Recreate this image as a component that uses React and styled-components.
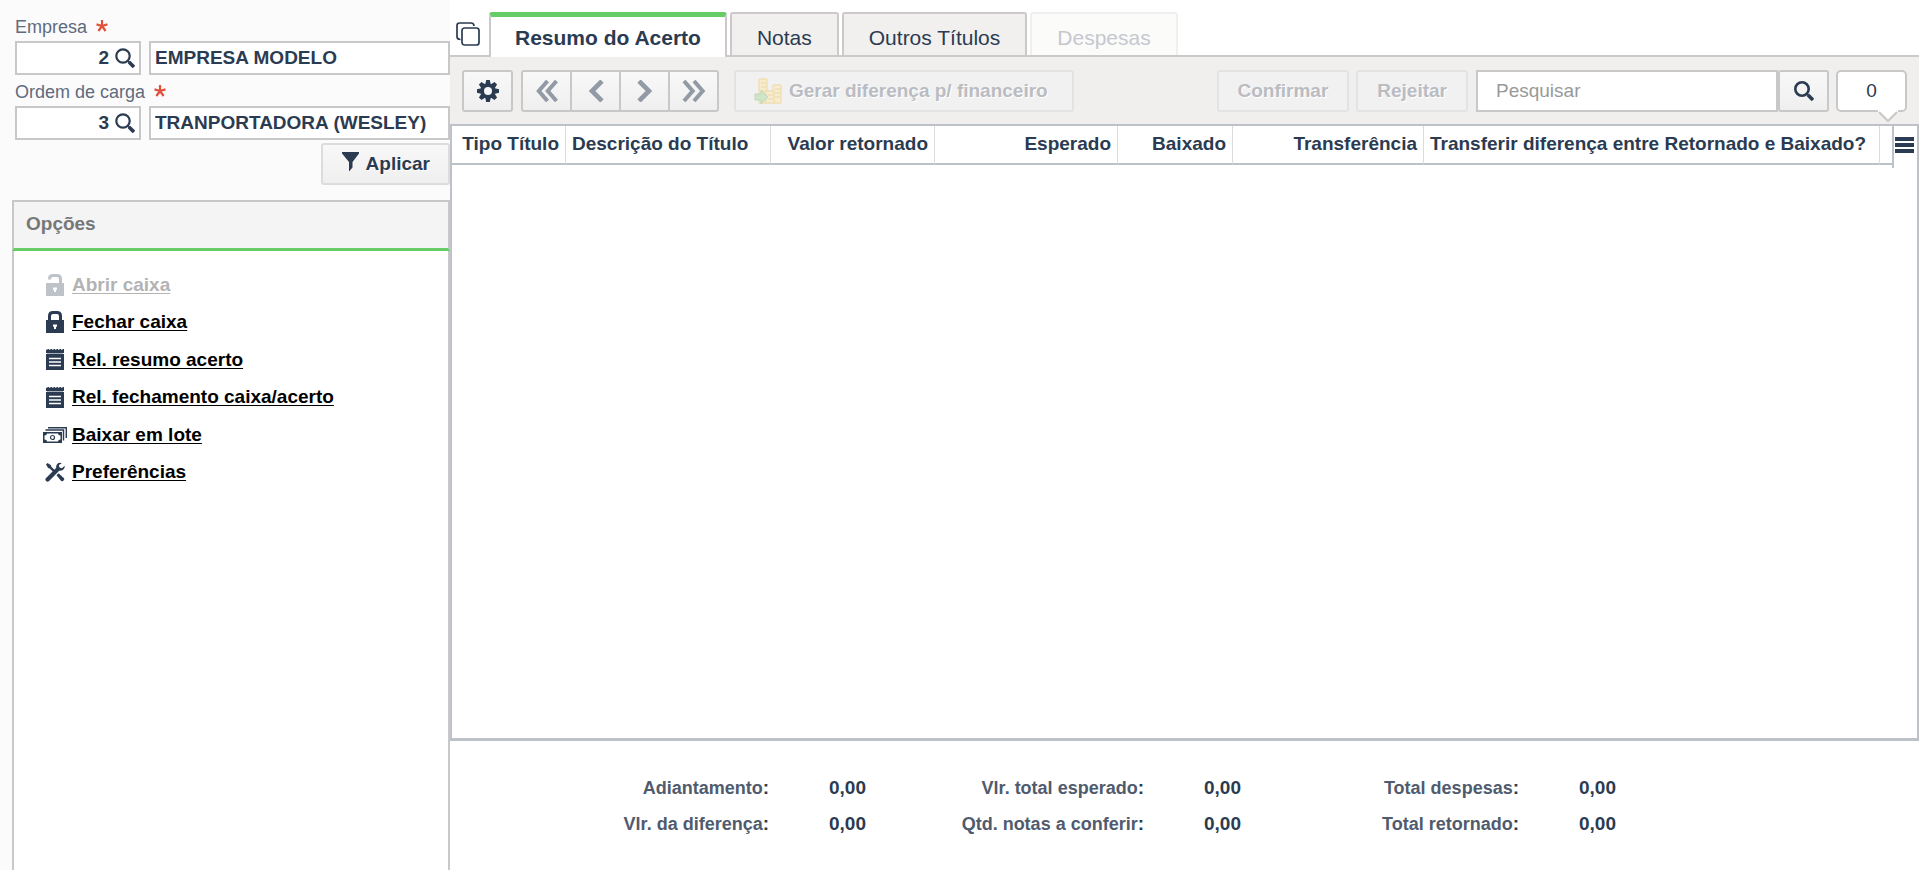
import React from "react";
import styled, { createGlobalStyle, css } from "styled-components";

const ink = "#2b3b51";
const line = "#c8c8c8";
const gridLine = "#bcc2c7";
const green = "#66cc66";

const GlobalStyle = createGlobalStyle`
  *, *::before, *::after { box-sizing: border-box; }
  body {
    margin: 0;
    background: #fff;
    color: ${ink};
    font-family: "Liberation Sans", Arial, sans-serif;
    font-size: 19px;
  }
  button, input { font: inherit; color: inherit; margin: 0; }
  svg { display: block; flex: none; }
`;

const Page = styled.div`
  display: grid;
  grid-template-columns: 450px minmax(0, 1fr);
  min-height: 100vh;
`;

/* ---------- sidebar ---------- */

const Sidebar = styled.aside`
  display: flex;
  flex-direction: column;
  background: #fbfbfb;
  padding: 12px 0 0 12px;
`;

const Filters = styled.form`
  display: flex;
  flex-direction: column;
  padding-left: 3px;
`;

const FieldLabel = styled.label`
  display: flex;
  align-items: flex-end;
  gap: 9px;
  height: 31px;
  font-size: 18px;
  line-height: 28px;
  color: #5f6b7e;
  &:first-child { height: 29px; }
`;

const Required = styled.svg`
  margin-bottom: 9px;
`;

const FieldRow = styled.div`
  display: flex;
  gap: 8px;
`;

const CodeBox = styled.div`
  display: flex;
  align-items: center;
  gap: 6px;
  width: 126px;
  height: 34px;
  padding-right: 4px;
  background: #fff;
  border: 2px solid ${line};
`;

const CodeInput = styled.input`
  flex: 1;
  min-width: 0;
  padding: 0;
  border: 0;
  background: none;
  font-weight: bold;
  text-align: right;
  outline: 0;
`;

const IconButton = styled.button`
  display: flex;
  padding: 0;
  border: 0;
  background: none;
`;

const NameInput = styled.input`
  flex: 1;
  min-width: 0;
  height: 34px;
  padding: 0 4px;
  background: #fff;
  border: 2px solid ${line};
  font-weight: bold;
`;

const Button = styled.button`
  display: flex;
  align-items: center;
  justify-content: center;
  gap: 7px;
  height: 42px;
  padding: ${(p) => p.$pad || "0"};
  min-width: 51px;
  border: 2px solid ${line};
  border-radius: 3px;
  background: linear-gradient(#f8f8f8, #efefef);
  font-weight: bold;
  text-shadow: 1px 1px 0 #fff;
  white-space: nowrap;
  ${(p) =>
    p.$soft &&
    css`
      border-color: #dcdcdc;
    `}
  &:disabled {
    color: #b9bcc2;
    border-color: #e4e3e4;
    background: #f2f1f1;
  }
`;

const ApplyRow = styled.div`
  display: flex;
  justify-content: flex-end;
  padding: 3px 0 15px;
`;

const OptionsPanel = styled.section`
  flex: 1;
  display: flex;
  flex-direction: column;
  background: #fff;
  border: 2px solid ${line};
  border-bottom: 0;
`;

const OptionsTitle = styled.h2`
  margin: 0 -2px;
  padding: 0 12px;
  height: 49px;
  line-height: 44px;
  font-size: 19px;
  color: #777;
  background: #f4f4f4;
  border: 2px solid ${line};
  border-top: 0;
  border-bottom: 3px solid ${green};
`;

const OptionsList = styled.ul`
  display: grid;
  grid-auto-rows: 1fr;
  height: 225px;
  margin: 15px 0;
  padding: 0 0 0 28px;
  list-style: none;
`;

const OptionItem = styled.li`
  display: flex;
  align-items: center;
  gap: 4px;
`;

const OptionIcon = styled.span`
  display: flex;
  justify-content: center;
  width: 26px;
  opacity: ${(p) => (p.$off ? 0.3 : 1)};
`;

const OptionLink = styled.a`
  color: ${(p) => (p.$off ? "#b3b3b3" : "#000")};
  font-weight: bold;
  text-decoration: underline;
  text-decoration-skip-ink: none;
  text-underline-offset: 2px;
`;

/* ---------- main area ---------- */

const Main = styled.main`
  display: flex;
  flex-direction: column;
  min-width: 0;
`;

const TabBar = styled.div`
  display: flex;
  align-items: flex-end;
  gap: 3px;
  height: 57px;
  border-bottom: 2px solid #cbc9ca;
`;

const CopyButton = styled(IconButton)`
  width: 36px;
  padding: 0 0 9px 6px;
`;

const Tab = styled.button`
  height: 43px;
  padding: 6px 25px 0;
  border: 2px solid #cdc8c9;
  border-bottom: 0;
  border-radius: 3px 3px 0 0;
  background: #f1f0ef;
  font-size: 21px;
  line-height: 24px;
  white-space: nowrap;
  ${(p) =>
    p.$active &&
    css`
      height: 45px;
      margin-bottom: -2px;
      padding: 4px 24px 3px;
      border-top: 5px solid ${green};
      background: #fff;
      font-weight: bold;
    `}
  &:disabled {
    color: #c5c8ce;
    border-color: #efefef;
    background: #fbfbfa;
  }
`;

const Toolbar = styled.div`
  display: flex;
  align-items: center;
  height: 67px;
  padding: 1px 12px 0;
  background: #f0efee;
`;

const NavGroup = styled.div`
  display: flex;
  margin: 0 15px 0 8px;
  color: #929aa6;
`;

const NavButton = styled(Button)`
  border-radius: 0;
  & + & { margin-left: -2px; }
  &:first-child { border-radius: 3px 0 0 3px; }
  &:last-child { border-radius: 0 3px 3px 0; }
`;

const Actions = styled.div`
  display: flex;
  gap: 7px;
  margin-left: auto;
`;

const SearchBox = styled.div`
  display: flex;
  margin: 0 7px 0 8px;
`;

const SearchInput = styled.input`
  width: 302px;
  height: 42px;
  padding: 0 18px;
  border: 2px solid ${line};
  background: #fff;
  &::placeholder { color: #999; opacity: 1; }
`;

const Counter = styled.output`
  position: relative;
  width: 71px;
  height: 42px;
  border: 2px solid ${line};
  border-radius: 5px;
  background: #fff;
  line-height: 38px;
  text-align: center;
`;

const CounterArrow = styled.svg`
  position: absolute;
  right: 7px;
  top: 38px;
`;

const GridPanel = styled.section`
  display: flex;
  align-items: flex-start;
  height: calc(100vh - 253px);
  min-height: 300px;
  border: 2px solid ${gridLine};
  border-bottom-width: 3px;
`;

const Table = styled.table`
  flex: 1;
  width: 0;
  table-layout: fixed;
  border-collapse: separate;
  border-spacing: 0;
`;

const HeadCell = styled.th`
  height: 39px;
  padding: 0 6px 1px;
  border-right: 1px solid #d9dcdf;
  border-bottom: 2px solid ${gridLine};
  text-align: ${(p) => p.$align || "right"};
  white-space: nowrap;
  overflow: hidden;
  &:last-child { border-right: 0; }
`;

const MenuButton = styled.button`
  display: flex;
  justify-content: center;
  width: 25px;
  height: 42px;
  padding: 11px 2px 0 0;
  border: 0;
  border-left: 2px solid ${gridLine};
  background: none;
`;

const Totals = styled.dl`
  display: grid;
  grid-template-columns: repeat(3, 375px);
  row-gap: 14px;
  margin: 0;
  padding: 36px 0 0 42px;
`;

const TotalItem = styled.div`
  display: flex;
  align-items: baseline;
  gap: 60px;
  line-height: 22px;
  font-weight: bold;
`;

const TotalLabel = styled.dt`
  width: 277px;
  text-align: right;
`;

const TotalName = styled.span`
  font-size: 18px;
  color: #505b6e;
`;

const TotalValue = styled.dd`
  margin: 0;
`;

/* ---------- icons ---------- */

const SearchIcon = ({ thick = 2.6 }) => (
  <svg width="20" height="20" viewBox="0 0 20 20" fill="none" stroke={ink}>
    <circle cx="8" cy="8" r="6.7" strokeWidth={thick} />
    <path d="M12.600 12.600l2 2" strokeWidth="2" />
    <path d="M14 14l5 5" strokeWidth="3.600" />
  </svg>
);

const Asterisk = () => (
  <Required width="12" height="12" viewBox="0 0 12 12" stroke="#e0503a" strokeWidth="2.2" fill="none" aria-hidden="true">
    <path d="M6 6V0M6 6L.5 4.4M6 6l5.500-1.600M6 6l-3.600 5M6 6l3.600 5" />
  </Required>
);

const FunnelShape = styled.svg`
  margin-bottom: 5px;
`;

const FunnelIcon = () => (
  <FunnelShape width="17" height="20" viewBox="0 0 17 20" fill={ink}>
    <path d="M0 0h17v1.500L10.500 10v5.500L7 19.500V10L0 1.500z" />
  </FunnelShape>
);

const LockIcon = ({ open }) => (
  <svg width="18" height="22" viewBox="0 0 18 22">
    <path
      d={open ? "M3.500 5.500V5q0-3.500 3.500-3.500h4q3.500 0 3.500 3.500v5" : "M3.500 10V5q0-3.500 3.500-3.500h4q3.500 0 3.500 3.500v5"}
      fill="none"
      stroke={ink}
      strokeWidth="3"
    />
    <path d="M0 9h18v13H0z" fill={ink} />
    <path d="M7 13.500h4v2.200h-1V18H8v-2.300H7z" fill="#fff" />
  </svg>
);

const ReportIcon = () => (
  <svg width="18" height="21" viewBox="0 0 18 21">
    <path d="M0 .7h1.500V0H3v.7h1.500V0H6v.7h1.500V0H9v.7h1.500V0H12v.7h1.500V0H15v.7h1.500V0H18v4H0zM1 4h16v1H1zM0 5h18v16H0z" fill={ink} />
    <path d="M0 4.500h18" stroke="#fff" strokeWidth=".6" />
    <path d="M3 9.500h12M3 13h12M3 16.500h12" stroke="#fff" strokeWidth="1.400" />
  </svg>
);

const MoneyIcon = () => (
  <svg width="24" height="16" viewBox="0 0 24 16">
    <path d="M5 .7h18.300V11M2.500 3h18v10.500" fill="none" stroke={ink} strokeWidth="1.400" />
    <path d="M0 5h19v11H0z" fill={ink} />
    <path d="M4 6.500h11q0 2 2.500 2v4q-2.500 0-2.500 2H4q0-2-2.500-2v-4q2.500 0 2.500-2z" fill="#fff" />
    <circle cx="9.500" cy="10.500" r="2" fill="none" stroke={ink} strokeWidth="1.200" />
  </svg>
);

const ToolsIcon = () => (
  <svg width="20" height="20" viewBox="0 0 20 20">
    <path d="M1 2.500L2.500 1l3.500 2.200.3 1.600 4 4-1.600 1.600-4-4-1.600-.3z" fill={ink} />
    <path d="M11.500 13.200l2-2 5.500 5q.8 1.300-.4 2.400-1.100 1.200-2.400.4z" fill={ink} />
    <path d="M2.600 17.400L13 7" stroke={ink} strokeWidth="4.200" strokeLinecap="round" />
    <path d="M16.800 1.200q-2.800-1-4.600.8-1.700 1.700-.8 4.300 2 3 5 2.300 3.400-1 3.400-4.800l-2.900 2.400-2.600-.7-.3-2.400z" fill={ink} />
  </svg>
);

const CopyIcon = () => (
  <svg width="24" height="24" viewBox="0 0 24 24" fill="none" stroke={ink} strokeWidth="1.700">
    <rect x="6" y="6" width="17" height="17" rx="2.500" />
    <path d="M4.500 17.500Q1 17.500 1 14.500V3.500q0-2.500 2.500-2.500h11.500q3 0 3 3" />
  </svg>
);

const GearIcon = () => (
  <svg width="22" height="22" viewBox="0 0 22 22">
    <g fill={ink}>
      {[0, 45, 90, 135].map((a) => (
        <path key={a} d="M9.200 0h3.600l.9 4v14l-.9 4H9.200l-.9-4V4z" transform={`rotate(${a} 11 11)`} />
      ))}
      <circle cx="11" cy="11" r="7.500" />
    </g>
    <circle cx="11" cy="11" r="4" fill="#f6f6f6" />
  </svg>
);

const Chevrons = ({ paths, width, stroke }) => (
  <svg width={width} height="22" viewBox={`0 0 ${width} 22`} fill="none" stroke="currentColor" strokeWidth={stroke}>
    <path d={paths} />
  </svg>
);

const CoinsIcon = () => (
  <svg width="28" height="26" viewBox="0 0 28 26" opacity=".45">
    <g fill="#fbe6a8" stroke="#efc765" strokeWidth="1.400">
      <rect x="5" y="1" width="8" height="24" rx="1" />
      <rect x="19" y="7" width="8" height="18" rx="1" />
      <rect x="12" y="13" width="8" height="12" rx="1" />
      <path d="M7 5h5M7 9h5M7 13h5M14 17h5M14 21h5M21 11h5M21 15h5M21 19h5" />
    </g>
    <path d="M1 16h6v-4l7 7-7 7v-4H1z" fill="#a5d59a" stroke="#7dbb78" />
  </svg>
);

const HamburgerIcon = () => (
  <svg width="19" height="16" viewBox="0 0 19 16" fill={ink}>
    <path d="M0 0h19v4H0zM0 6h19v4H0zM0 12h19v4H0z" />
  </svg>
);

/* ---------- data ---------- */

const fields = [
  { id: "empresa", label: "Empresa", code: "2", name: "EMPRESA MODELO" },
  { id: "ordem", label: "Ordem de carga", code: "3", name: "TRANPORTADORA (WESLEY)" },
];

const options = [
  { label: "Abrir caixa", icon: <LockIcon open />, off: true },
  { label: "Fechar caixa", icon: <LockIcon /> },
  { label: "Rel. resumo acerto", icon: <ReportIcon /> },
  { label: "Rel. fechamento caixa/acerto", icon: <ReportIcon /> },
  { label: "Baixar em lote", icon: <MoneyIcon /> },
  { label: "Preferências", icon: <ToolsIcon /> },
];

const tabs = [
  { label: "Resumo do Acerto", active: true },
  { label: "Notas" },
  { label: "Outros Títulos" },
  { label: "Despesas", disabled: true },
];

const navs = [
  { label: "Primeiro", width: 22, stroke: 4, paths: "M11.500 1L2.800 11l8.700 10M20.500 1l-8.700 10 8.700 10" },
  { label: "Anterior", width: 16, stroke: 4.6, paths: "M14 1L4 11l10 10" },
  { label: "Próximo", width: 16, stroke: 4.6, paths: "M2 1l10 10L2 21" },
  { label: "Último", width: 24, stroke: 4, paths: "M2 1l8.700 10L2 21M12 1l8.700 10L12 21" },
];

const columns = [
  { label: "Tipo Título", width: 114 },
  { label: "Descrição do Título", width: 205, align: "left" },
  { label: "Valor retornado", width: 164 },
  { label: "Esperado", width: 183 },
  { label: "Baixado", width: 115 },
  { label: "Transferência", width: 191 },
  { label: "Transferir diferença entre Retornado e Baixado?", width: 456, align: "left" },
  { label: "" },
];

const totals = [
  ["Adiantamento", "0,00"],
  ["Vlr. total esperado", "0,00"],
  ["Total despesas", "0,00"],
  ["Vlr. da diferença", "0,00"],
  ["Qtd. notas a conferir", "0,00"],
  ["Total retornado", "0,00"],
];

export default function App() {
  return (
    <Page>
      <GlobalStyle />
      <Sidebar>
        <Filters onSubmit={(e) => e.preventDefault()}>
          {fields.map((f) => (
            <React.Fragment key={f.id}>
              <FieldLabel htmlFor={f.id}>
                {f.label}
                <Asterisk />
              </FieldLabel>
              <FieldRow>
                <CodeBox>
                  <CodeInput id={f.id} defaultValue={f.code} />
                  <IconButton type="button" aria-label={`Pesquisar ${f.label}`}>
                    <SearchIcon thick={2.2} />
                  </IconButton>
                </CodeBox>
                <NameInput aria-label={`Nome: ${f.label}`} defaultValue={f.name} />
              </FieldRow>
            </React.Fragment>
          ))}
          <ApplyRow>
            <Button type="submit" $soft $pad="0 18px 0 19px">
              <FunnelIcon />
              Aplicar
            </Button>
          </ApplyRow>
        </Filters>
        <OptionsPanel>
          <OptionsTitle>Opções</OptionsTitle>
          <OptionsList>
            {options.map((o) => (
              <OptionItem key={o.label}>
                <OptionIcon $off={o.off}>{o.icon}</OptionIcon>
                <OptionLink href="#" $off={o.off} aria-disabled={o.off}>
                  {o.label}
                </OptionLink>
              </OptionItem>
            ))}
          </OptionsList>
        </OptionsPanel>
      </Sidebar>

      <Main>
        <TabBar>
          <CopyButton type="button" aria-label="Copiar">
            <CopyIcon />
          </CopyButton>
          {tabs.map((t) => (
            <Tab key={t.label} type="button" $active={t.active} disabled={t.disabled}>
              {t.label}
            </Tab>
          ))}
        </TabBar>

        <Toolbar>
          <Button type="button" aria-label="Configurações">
            <GearIcon />
          </Button>
          <NavGroup>
            {navs.map((n) => (
              <NavButton key={n.label} type="button" aria-label={n.label}>
                <Chevrons paths={n.paths} width={n.width} stroke={n.stroke} />
              </NavButton>
            ))}
          </NavGroup>
          <Button type="button" disabled $pad="0 24px 0 18px">
            <CoinsIcon />
            Gerar diferença p/ financeiro
          </Button>
          <Actions>
            <Button type="button" disabled $pad="0 19px">
              Confirmar
            </Button>
            <Button type="button" disabled $pad="0 19px">
              Rejeitar
            </Button>
          </Actions>
          <SearchBox>
            <SearchInput type="text" placeholder="Pesquisar" aria-label="Pesquisar" />
            <Button type="button" aria-label="Buscar">
              <SearchIcon />
            </Button>
          </SearchBox>
          <Counter>
            0
            <CounterArrow width="20" height="14" viewBox="0 0 20 14" aria-hidden="true">
              <path d="M0 0h20v2L10 12 0 2z" fill="#fff" />
              <path d="M1 2l9 9 9-9" fill="none" stroke={line} strokeWidth="2" />
            </CounterArrow>
          </Counter>
        </Toolbar>

        <GridPanel>
          <Table>
            <colgroup>
              {columns.map((c) => (
                <col key={c.label} width={c.width} />
              ))}
            </colgroup>
            <thead>
              <tr>
                {columns.map((c) => (
                  <HeadCell key={c.label} $align={c.align} scope="col">
                    {c.label}
                  </HeadCell>
                ))}
              </tr>
            </thead>
          </Table>
          <MenuButton type="button" aria-label="Colunas">
            <HamburgerIcon />
          </MenuButton>
        </GridPanel>

        <Totals>
          {totals.map(([name, value]) => (
            <TotalItem key={name}>
              <TotalLabel>
                <TotalName>{name}</TotalName>:
              </TotalLabel>
              <TotalValue>{value}</TotalValue>
            </TotalItem>
          ))}
        </Totals>
      </Main>
    </Page>
  );
}
